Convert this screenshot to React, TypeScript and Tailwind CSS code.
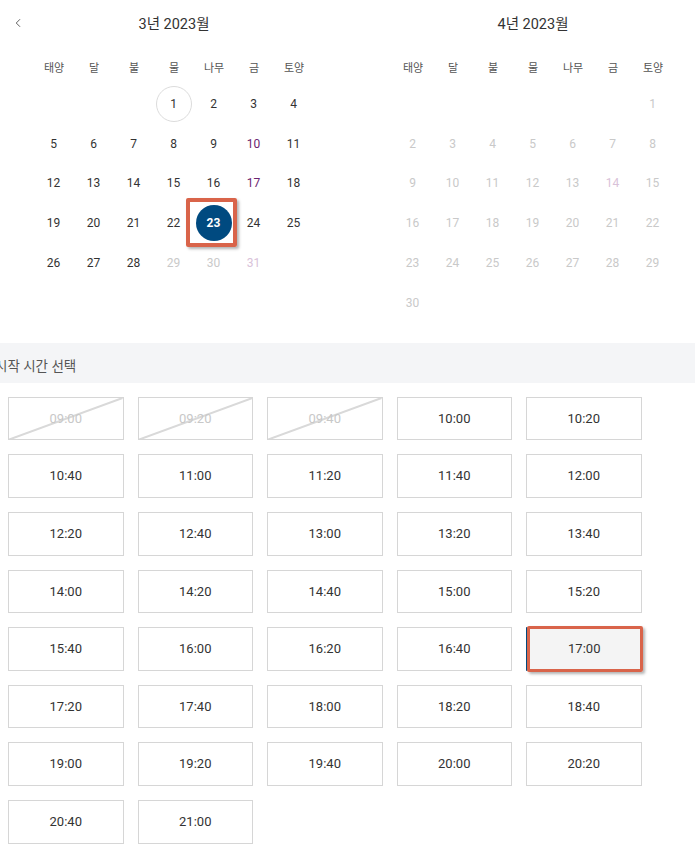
import { ChevronLeft } from "lucide-react";

const WEEKDAYS = ["태양", "달", "불", "물", "나무", "금", "토양"];

const TIMES = [
  "09:00", "09:20", "09:40", "10:00", "10:20",
  "10:40", "11:00", "11:20", "11:40", "12:00",
  "12:20", "12:40", "13:00", "13:20", "13:40",
  "14:00", "14:20", "14:40", "15:00", "15:20",
  "15:40", "16:00", "16:20", "16:40", "17:00",
  "17:20", "17:40", "18:00", "18:20", "18:40",
  "19:00", "19:20", "19:40", "20:00", "20:20",
  "20:40", "21:00",
];
const DISABLED = ["09:00", "09:20", "09:40"];

type Day = { n: number; tone: "dark" | "purple" | "muted" | "pink" };

function buildMonth(offset: number, total: number, lastActive: number, accent: number[], pink: number[]): (Day | null)[] {
  const cells: (Day | null)[] = Array(offset).fill(null);
  for (let n = 1; n <= total; n++) {
    let tone: Day["tone"] = n <= lastActive ? "dark" : "muted";
    if (accent.includes(n)) tone = "purple";
    if (pink.includes(n)) tone = "pink";
    cells.push({ n, tone });
  }
  return cells;
}

const MARCH = buildMonth(3, 31, 28, [10, 17], [31]);
const APRIL = buildMonth(6, 30, 0, [], [14]);

const toneClass = {
  dark: "text-[#333]",
  purple: "text-[#6b2470]",
  muted: "text-[#c9c9c9]",
  pink: "text-[#d9c2d9]",
};

function Month({ title, days, showBack }: { title: string; days: (Day | null)[]; showBack?: boolean }) {
  return (
    <div className="w-[280px]">
      <div className="h-[50px] flex items-center justify-center text-[14.5px] text-[#333]">{title}</div>
      <div className="grid grid-cols-7 h-[34px] pt-[4px] items-center text-center text-[11px] text-[#555]">
        {WEEKDAYS.map((w) => (
          <span key={w}>{w}</span>
        ))}
      </div>
      <div className="grid grid-cols-7 auto-rows-[39.8px] text-[12px]">
        {days.map((d, i) => (
          <div key={i} className="relative flex items-center justify-center pr-[1px]">
            {d && d.n === 1 && showBack ? (
              <span className="w-[36px] h-[36px] rounded-full border border-[#dcdcdc] flex items-center justify-center text-[#333]">
                1
              </span>
            ) : d && d.n === 23 && showBack ? (
              <>
                <span className="w-[36px] h-[36px] rounded-full bg-[#004a80] flex items-center justify-center text-white font-bold">
                  23
                </span>
                <span className="absolute left-[-8px] top-[-5px] w-[51px] h-[49px] border-4 border-[#d9644a] rounded-[2px] shadow-[2px_2px_3px_rgba(0,0,0,0.3)]" />
              </>
            ) : d ? (
              <span className={toneClass[d.tone]}>{d.n}</span>
            ) : null}
          </div>
        ))}
      </div>
    </div>
  );
}

export default function App() {
  return (
    <div className="w-[695px] h-[854px] bg-white overflow-hidden relative font-['Roboto','Noto_Sans_CJK_KR',sans-serif]">
      {/* Calendars */}
      <ChevronLeft className="absolute left-[11px] top-[16px] w-[14px] h-[14px] text-[#555]" strokeWidth={1.6} />
      <div className="flex pl-[34px] gap-[79px]">
        <Month title="3년 2023월" days={MARCH} showBack />
        <Month title="4년 2023월" days={APRIL} />
      </div>

      {/* Section header */}
      <div className="mt-[20px] h-[40px] bg-[#f4f5f7] flex items-center pt-[6px]">
        <span className="ml-[-5px] text-[13.5px] text-[#555]">시작 시간 선택</span>
      </div>

      {/* Time slots */}
      <div className="mt-[14px] ml-[8px] grid grid-cols-[repeat(5,115.5px)] gap-x-[14px] gap-y-[14px] auto-rows-[43.6px]">
        {TIMES.map((t) => {
          const disabled = DISABLED.includes(t);
          const selected = t === "17:00";
          if (selected) {
            return (
              <div key={t} className="relative">
                <div className="h-full flex items-center justify-center bg-[#f4f4f4] border border-[#d6d6d6] border-l-2 border-l-[#004a80] text-[13px] text-[#333]">
                  {t}
                </div>
                <span className="absolute left-[1px] top-[-1px] right-[-1px] bottom-[-1px] border-[3px] border-[#d9644a] rounded-[2px] shadow-[2px_2px_3px_rgba(0,0,0,0.3)]" />
              </div>
            );
          }
          return (
            <div
              key={t}
              className={`relative flex items-center justify-center border border-[#d6d6d6] text-[13px] ${
                disabled ? "text-[#c8c8c8]" : "text-[#333]"
              }`}
            >
              {disabled && (
                <svg className="absolute inset-0 w-full h-full" viewBox="0 0 100 100" preserveAspectRatio="none">
                  <line x1="0" y1="100" x2="100" y2="0" stroke="#d9d9d9" strokeWidth="2" vectorEffect="non-scaling-stroke" />
                </svg>
              )}
              <span className="relative">{t}</span>
            </div>
          );
        })}
      </div>
    </div>
  );
}
